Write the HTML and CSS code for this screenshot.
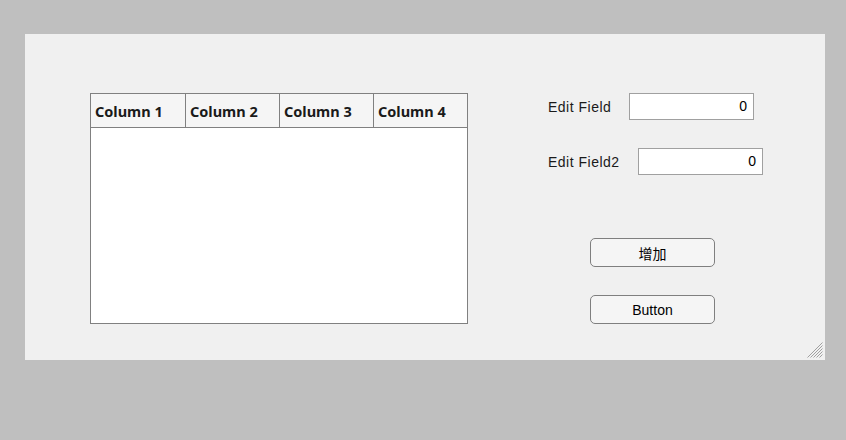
FILE: index.html
```html
<!DOCTYPE html>
<html>
<head>
<meta charset="utf-8">
<link rel="stylesheet" href="styles.css">
</head>
<body>
<div class="figure">
  <div class="table">
    <div class="thead">
      <div class="th">Column 1</div>
      <div class="th">Column 2</div>
      <div class="th">Column 3</div>
      <div class="th last">Column 4</div>
    </div>
    <div class="tbody"></div>
  </div>
  <div class="controls">
    <div class="field">
      <label class="lbl lbl1">Edit Field</label>
      <div class="input">0</div>
    </div>
    <div class="field field2">
      <label class="lbl lbl2">Edit Field2</label>
      <div class="input">0</div>
    </div>
    <div class="buttons">
      <button class="btn">增加</button>
      <button class="btn btn2">Button</button>
    </div>
  </div>
  <svg class="grip" width="18" height="18" viewBox="0 0 18 18">
    <g stroke="#a0a0a0" stroke-width="1">
      <line x1="17.5" y1="2.5" x2="2.5" y2="17.5"/>
      <line x1="17.5" y1="5.5" x2="5.5" y2="17.5"/>
      <line x1="17.5" y1="8.5" x2="8.5" y2="17.5"/>
      <line x1="17.5" y1="11.5" x2="11.5" y2="17.5"/>
      <line x1="17.5" y1="14.5" x2="14.5" y2="17.5"/>
    </g>
  </svg>
</div>
</body>
</html>
```
FILE: styles.css
```css
html, body {
  margin: 0;
  padding: 0;
}
body {
  background: #bfbfbf;
  width: 846px;
  height: 440px;
  padding: 34px 0 0 25px;
  box-sizing: border-box;
  font-family: "Liberation Sans", "Noto Sans CJK SC", Arial, sans-serif;
  color: #1a1a1a;
}
.figure {
  position: relative;
  width: 800px;
  height: 326px;
  background: #f0f0f0;
  box-sizing: border-box;
  padding: 59px 0 0 65px;
  display: flex;
  align-items: flex-start;
}
.table {
  width: 378px;
  height: 231px;
  border: 1px solid #808080;
  box-sizing: border-box;
  background: #fff;
  display: flex;
  flex-direction: column;
}
.thead {
  display: flex;
  height: 33px;
  background: #f5f5f5;
  border-bottom: 1px solid #808080;
}
.th {
  width: 95px;
  border-right: 1px solid #808080;
  box-sizing: border-box;
  font-family: "Noto Sans", "Open Sans", sans-serif;
  font-weight: bold;
  font-size: 14.5px;
  line-height: 34px;
  padding-left: 4px;
  color: #1a1a1a;
}
.th + .th {
  width: 94px;
}
.th.last {
  flex: 1;
  border-right: none;
}
.tbody {
  flex: 1;
}
.controls {
  margin-left: 80px;
  display: flex;
  flex-direction: column;
}
.field {
  display: flex;
  align-items: center;
  height: 27px;
}
.field2 {
  margin-top: 28px;
}
.lbl {
  font-size: 14px;
  letter-spacing: 0.5px;
  color: #1a1a1a;
}
.lbl1 { width: 81px; }
.lbl2 { width: 90px; }
.input {
  width: 125px;
  height: 27px;
  box-sizing: border-box;
  border: 1px solid #a0a0a0;
  background: #fff;
  font-size: 14px;
  text-align: right;
  line-height: 25px;
  padding-right: 6px;
  color: #000;
}
.buttons {
  margin-left: 42px;
  margin-top: 63px;
  display: flex;
  flex-direction: column;
}
.btn {
  width: 125px;
  height: 29px;
  box-sizing: border-box;
  border: 1px solid #7f7f7f;
  border-radius: 5px;
  background: #f5f5f5;
  font-family: "Liberation Sans", "Noto Sans CJK SC", Arial, sans-serif;
  font-size: 14px;
  color: #000;
  padding: 0;
}
.btn2 {
  margin-top: 28px;
}
.grip {
  position: absolute;
  right: 2px;
  bottom: 2px;
}
```
